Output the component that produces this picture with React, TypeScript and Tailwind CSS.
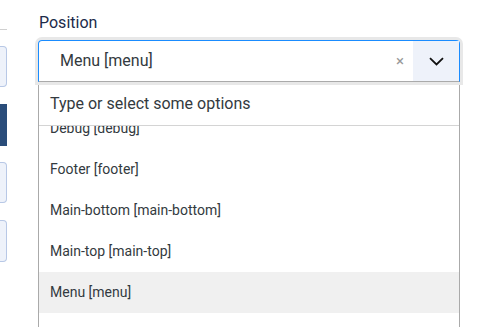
import React from "react";

export default function App() {
  const options = [
    "Debug [debug]",
    "Footer [footer]",
    "Main-bottom [main-bottom]",
    "Main-top [main-top]",
    "Menu [menu]",
  ];
  return (
    <div
      className="w-[496px] h-[327px] bg-white overflow-hidden flex"
      style={{ fontFamily: "Roboto, 'Liberation Sans', sans-serif" }}
    >
      <div className="w-[7px] flex flex-col shrink-0">
        <div className="h-[29px]" />
        <div className="h-px bg-[#d0d0d0]" />
        <div className="h-[16px]" />
        <div className="h-[41px] bg-[#eef2fa] border border-l-0 border-[#b8c8e6] rounded-r-[4px]" />
        <div className="h-[17px]" />
        <div className="h-[42px] bg-[#2a4d7a]" />
        <div className="h-[16px]" />
        <div className="h-[41px] bg-[#eef2fa] border border-l-0 border-[#b8c8e6] rounded-r-[4px]" />
        <div className="h-[17px]" />
        <div className="h-[42px] bg-[#eef2fa] border border-l-0 border-[#b8c8e6] rounded-r-[4px]" />
      </div>
      <div className="ml-[31px] w-[422px] flex flex-col">
        <div className="h-[40px] pt-[13px]">
          <div className="text-[16px] leading-[20px] text-[#1c2b4a] pl-px">Position</div>
        </div>
        <div className="h-[42px] flex border border-[#1a8cff] border-b-[#aaaaaa] rounded-t-[4px] shadow-[0_0_0_3px_#e8e8e8] relative z-10">
          <div className="flex-1 flex items-center pl-[21px] text-[16px] text-[#333a40]">
            Menu [menu]
          </div>
          <div className="w-[26px] flex items-center justify-center text-[#999] text-[15px]">
            ×
          </div>
          <div className="w-[46px] bg-[#eef2fa] flex items-center justify-center">
            <svg width="15" height="9" viewBox="0 0 15 9" fill="none">
              <path d="M1 1.2 L7.5 7.5 L14 1.2" stroke="#111" strokeWidth="1.8" />
            </svg>
          </div>
        </div>
        <div className="flex-1 border-x border-[#aaaaaa] flex flex-col min-h-0">
          <div className="h-[44px] flex items-center pl-[11px] text-[16px] text-[#333a40] border-b border-[#d4d4d4]">
            Type or select some options
          </div>
          <div className="flex-1 overflow-hidden">
            <div className="-mt-[18px]">
              {options.map((o) => (
                <div
                  key={o}
                  className={
                    "h-[41px] flex items-center pl-[11px] text-[14px] text-[#333a40] " +
                    (o === "Menu [menu]" ? "bg-[#f0f0f0]" : "")
                  }
                >
                  {o}
                </div>
              ))}
            </div>
          </div>
        </div>
      </div>
    </div>
  );
}
